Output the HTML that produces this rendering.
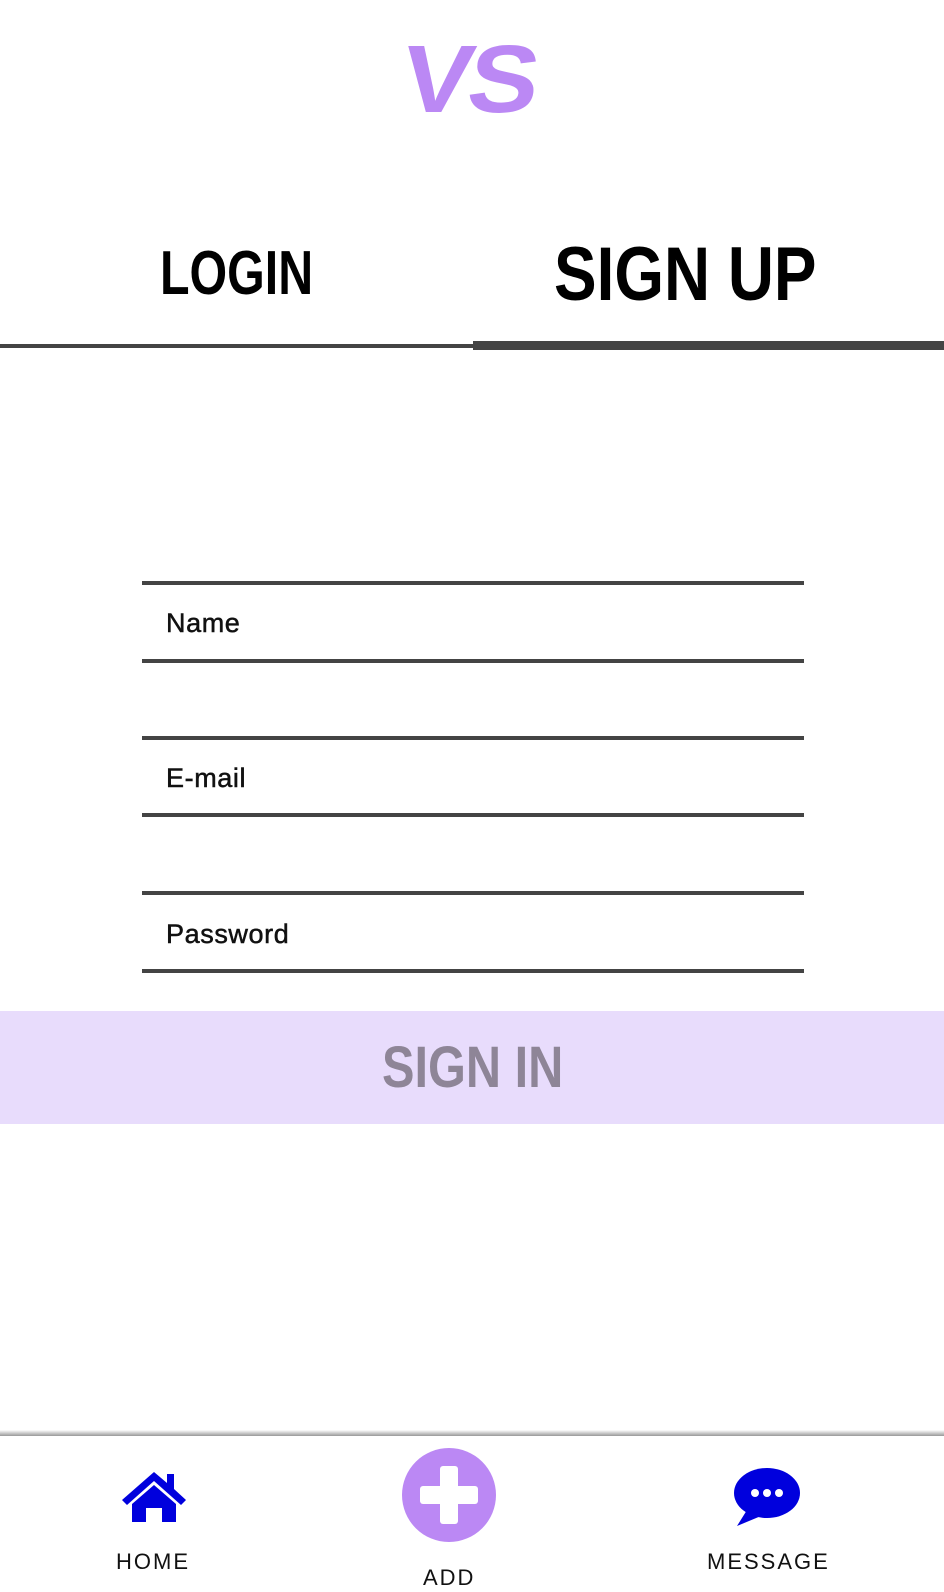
<!DOCTYPE html>
<html><head><style>
body{margin:0;width:944px;height:1592px;background:#fff;position:relative;overflow:hidden;font-family:"Liberation Sans",sans-serif}
.a{position:absolute}
.t{font-weight:bold;transform-origin:left top;white-space:nowrap;line-height:1}
.ln{position:absolute;left:142px;width:662px;height:4px;background:#444}
.lb{position:absolute;left:166px;font-size:27px;color:#111;line-height:1;letter-spacing:0.6px;-webkit-text-stroke:0.5px #111}
.nl{position:absolute;font-size:22px;letter-spacing:2px;color:#111;line-height:1}
</style></head><body>
<div class="a t" style="left:396px;top:32px;font-size:96px;color:#bb88f4;transform-origin:left bottom;transform:skewX(-8deg) scaleX(1.1);letter-spacing:-4px">VS</div>
<div class="a t" style="left:160px;top:243px;font-size:62px;transform:scaleX(0.78)">LOGIN</div>
<div class="a t" style="left:554px;top:237px;font-size:76px;transform:scaleX(0.84)">SIGN UP</div>
<div class="a" style="left:0;top:344px;width:473px;height:4px;background:#444"></div>
<div class="a" style="left:473px;top:341px;width:471px;height:9px;background:#444"></div>
<div class="ln" style="top:581px"></div><div class="ln" style="top:659px"></div>
<div class="ln" style="top:736px"></div><div class="ln" style="top:813px"></div>
<div class="ln" style="top:891px"></div><div class="ln" style="top:969px"></div>
<div class="lb" style="top:610px">Name</div>
<div class="lb" style="top:765px">E-mail</div>
<div class="lb" style="top:921px">Password</div>
<div class="a" style="left:0;top:1011px;width:944px;height:113px;background:#e8dcfc"></div>
<div class="a t" style="left:382px;top:1039px;font-size:58px;color:#8e8597;transform:scaleX(0.84)">SIGN IN</div>
<div class="a" style="left:0;top:1430px;width:944px;height:6px;background:linear-gradient(#fff,#999)"></div>
<svg class="a" style="left:120px;top:1470px" width="68" height="54" viewBox="0 0 68 54"><path d="M34 2 L2 30 L7 35 L34 11 L61 35 L66 30 L54 19 L54 4 L47 4 L47 13 Z M12 34 L34 15 L56 34 L56 52 L42 52 L42 38 L26 38 L26 52 L12 52 Z" fill="#0000dd"/></svg>
<div class="nl" style="left:116px;top:1551px">HOME</div>
<div class="a" style="left:402px;top:1448px;width:94px;height:94px;border-radius:50%;background:#bb88f4"></div>
<div class="a" style="left:440px;top:1466px;width:18px;height:58px;background:#fff;border-radius:3px"></div>
<div class="a" style="left:420px;top:1486px;width:58px;height:18px;background:#fff;border-radius:3px"></div>
<div class="nl" style="left:423px;top:1567px">ADD</div>
<svg class="a" style="left:733px;top:1466px" width="68" height="62" viewBox="0 0 68 62"><ellipse cx="34" cy="27" rx="33" ry="25" fill="#0000dd"/><path d="M14 44 L4 60 L28 50 Z" fill="#0000dd"/><circle cx="22" cy="27" r="4" fill="#fff"/><circle cx="34" cy="27" r="4" fill="#fff"/><circle cx="46" cy="27" r="4" fill="#fff"/></svg>
<div class="nl" style="left:707px;top:1551px">MESSAGE</div>
</body></html>
